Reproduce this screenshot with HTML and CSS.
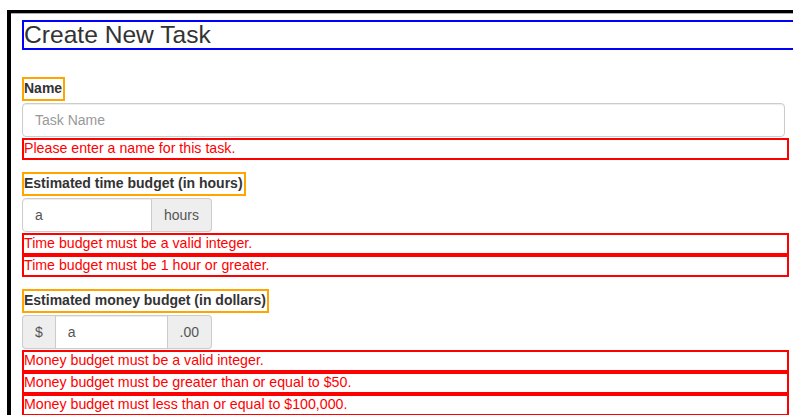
FILE: index.html
```html
<!DOCTYPE html>
<html lang="en">
<head>
<meta charset="utf-8">
<title>Create New Task</title>
<link rel="stylesheet" href="styles.css">
</head>
<body>
  <div class="panel">
    <h1 class="title">Create New Task</h1>
    <form class="task-form">
      <div class="group">
        <label class="field-label" for="name">Name</label>
        <input class="control control-wide" id="name" type="text" placeholder="Task Name">
        <div class="error">Please enter a name for this task.</div>
      </div>

      <div class="group">
        <label class="field-label" for="hours">Estimated time budget (in hours)</label>
        <div class="input-group">
          <input class="control control-joined-left" id="hours" type="text" value="a">
          <span class="addon addon-right">hours</span>
        </div>
        <div class="error">Time budget must be a valid integer.</div>
        <div class="error">Time budget must be 1 hour or greater.</div>
      </div>

      <div class="group">
        <label class="field-label" for="money">Estimated money budget (in dollars)</label>
        <div class="input-group">
          <span class="addon addon-left">$</span>
          <input class="control control-joined-both" id="money" type="text" value="a">
          <span class="addon addon-right">.00</span>
        </div>
        <div class="error">Money budget must be a valid integer.</div>
        <div class="error">Money budget must be greater than or equal to $50.</div>
        <div class="error">Money budget must less than or equal to $100,000.</div>
      </div>
    </form>
  </div>
</body>
</html>
```

FILE: styles.css
```css
html, body {
  margin: 0;
  padding: 0;
  overflow: hidden;
  background: #fff;
}

body {
  font-family: "Liberation Sans", Arial, Helvetica, sans-serif;
  font-size: 14px;
  color: #333;
}

/* outer frame: open on the right, it spans the full window width */
.panel {
  margin: 10px 0 0 7px;
  border-top: 3px solid #000;
  border-left: 4px solid #000;
  box-shadow: inset 0 1px 0 #aaa;
  padding: 7px 0 0 11px;
}

.title {
  margin: 0;
  border: 2px solid #0000ff;
  border-right: none;
  font-size: 24.6px;
  line-height: 26px;
  font-weight: normal;
  color: #333;
}

.task-form {
  width: 767px;
  margin-top: 27px;
}

.group {
  margin-bottom: 12px;
}

.field-label {
  display: inline-block;
  border: 2px solid #ffa500;
  font-weight: bold;
  line-height: 18px;
  padding: 0 1px 2px 0;
  margin-bottom: 2px;
  color: #333;
}

.control {
  display: block;
  box-sizing: border-box;
  height: 34px;
  padding: 6px 12px;
  font-family: inherit;
  font-size: 14px;
  line-height: 20px;
  color: #555;
  background: #fff;
  border: 1px solid #ccc;
  border-radius: 4px;
  box-shadow: inset 0 1px 1px rgba(0, 0, 0, 0.075);
  margin: 0 0 1px;
  outline: none;
}

.control::placeholder {
  color: #999;
}

.control-wide {
  width: calc(100% - 4px);
}

.input-group {
  display: flex;
  width: 190px;
  height: 34px;
  margin-bottom: 1px;
}

.input-group .control {
  flex: 1;
  min-width: 0;
  margin: 0;
}

.control-joined-left {
  border-top-right-radius: 0;
  border-bottom-right-radius: 0;
}

.control-joined-both {
  border-radius: 0;
}

.addon {
  display: flex;
  align-items: center;
  box-sizing: border-box;
  height: 34px;
  padding: 0 12px;
  font-size: 14px;
  color: #555;
  background: #eee;
  border: 1px solid #ccc;
}

.addon-left {
  border-right: none;
  border-radius: 4px 0 0 4px;
}

.addon-right {
  border-left: none;
  border-radius: 0 4px 4px 0;
}

.error {
  border: 2px solid #ff0000;
  color: #ff0000;
  font-size: 14.2px;
  line-height: 16px;
  padding: 0 0 2px;
}
```
